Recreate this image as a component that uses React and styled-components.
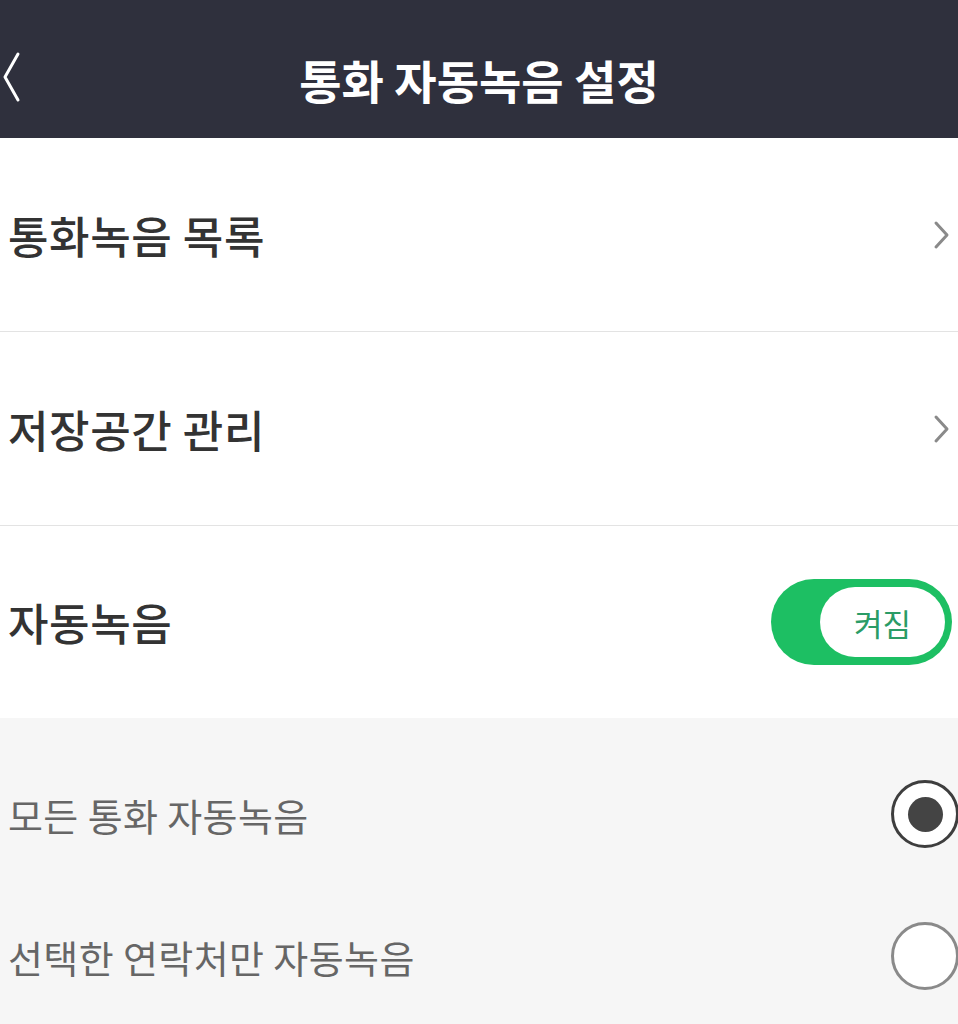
import React from 'react';
import styled, { createGlobalStyle } from 'styled-components';

const GlobalStyle = createGlobalStyle`
	html, body {
		margin: 0;
		padding: 0;
		background: #f6f6f6;
	}
	body {
		font-family: "Noto Sans CJK KR", "Noto Sans", sans-serif;
	}
`;

const Page = styled.div`
	width: 958px;
	min-height: 1024px;
	background: #f6f6f6;
	overflow: hidden;
`;

const Header = styled.header`
	position: relative;
	height: 138px;
	box-sizing: border-box;
	padding-top: 20px;
	background: #2f303d;
	display: flex;
	align-items: center;
	justify-content: center;
`;

const BackButton = styled.button`
	position: absolute;
	left: 2px;
	top: 51px;
	width: 20px;
	height: 52px;
	padding: 0;
	border: none;
	background: none;
	display: flex;
`;

const Title = styled.h1`
	margin: 0;
	color: #ffffff;
	font-size: 46px;
	font-weight: 700;
	letter-spacing: 0;
`;

const Section = styled.div`
	background: #ffffff;
`;

const Row = styled.div`
	height: ${(p) => p.h}px;
	display: flex;
	align-items: center;
	justify-content: space-between;
	padding: 0 7px 0 8px;
	border-bottom: ${(p) => (p.divider ? '1px solid #e3e3e3' : 'none')};
`;

const Label = styled.span`
	font-size: 44px;
	font-weight: 500;
	color: #333333;
	letter-spacing: 0.6px;
`;

const OptionList = styled.div`
	padding-top: 25px;
	background: #f6f6f6;
`;

const Option = styled.div`
	height: 142px;
	display: flex;
	align-items: center;
	justify-content: space-between;
	padding: 0 0 0 8px;
`;

const OptionLabel = styled.span`
	font-size: 38px;
	font-weight: 400;
	color: #666666;
	letter-spacing: 0.4px;
`;

const Radio = styled.span`
	width: 68px;
	height: 68px;
	box-sizing: border-box;
	border-radius: 50%;
	margin-right: -1px;
	background: #ffffff;
	border: 3px solid ${(p) => (p.checked ? '#3e3e3e' : '#8a8a8a')};
	display: flex;
	align-items: center;
	justify-content: center;
	flex-shrink: 0;

	&::after {
		content: '';
		display: ${(p) => (p.checked ? 'block' : 'none')};
		width: 35px;
		height: 35px;
		border-radius: 50%;
		background: #444444;
	}
`;

const Toggle = styled.div`
	width: 181px;
	height: 86px;
	box-sizing: border-box;
	border-radius: 43px;
	background: #1dbf63;
	padding: 8px 7px 8px 49px;
	margin-right: -1px;
	display: flex;
`;

const ToggleKnob = styled.div`
	flex: 1;
	border-radius: 35px;
	background: #ffffff;
	display: flex;
	align-items: center;
	justify-content: center;
	color: #2a9c66;
	font-size: 31px;
	font-weight: 400;
`;

const Chevron = () => (
	<svg width="18" height="30" viewBox="0 0 18 30">
		<path d="M3 3 L14 15 L3 27" fill="none" stroke="#8a8a8a" strokeWidth="3" strokeLinecap="round" strokeLinejoin="round" />
	</svg>
);

const BackIcon = () => (
	<svg width="20" height="52" viewBox="0 0 20 52">
		<path d="M16 3 L3 26 L16 49" fill="none" stroke="#ffffff" strokeWidth="3" strokeLinecap="round" strokeLinejoin="round" />
	</svg>
);

const App = () => (
	<Page>
		<GlobalStyle />
		<Header>
			<BackButton>
				<BackIcon />
			</BackButton>
			<Title>통화 자동녹음 설정</Title>
		</Header>
		<Section>
			<Row h={193} divider>
				<Label>통화녹음 목록</Label>
				<Chevron />
			</Row>
			<Row h={193} divider>
				<Label>저장공간 관리</Label>
				<Chevron />
			</Row>
			<Row h={192}>
				<Label>자동녹음</Label>
				<Toggle>
					<ToggleKnob>켜짐</ToggleKnob>
				</Toggle>
			</Row>
		</Section>
		<OptionList>
			<Option>
				<OptionLabel>모든 통화 자동녹음</OptionLabel>
				<Radio checked />
			</Option>
			<Option>
				<OptionLabel>선택한 연락처만 자동녹음</OptionLabel>
				<Radio />
			</Option>
		</OptionList>
	</Page>
);

export default App;
